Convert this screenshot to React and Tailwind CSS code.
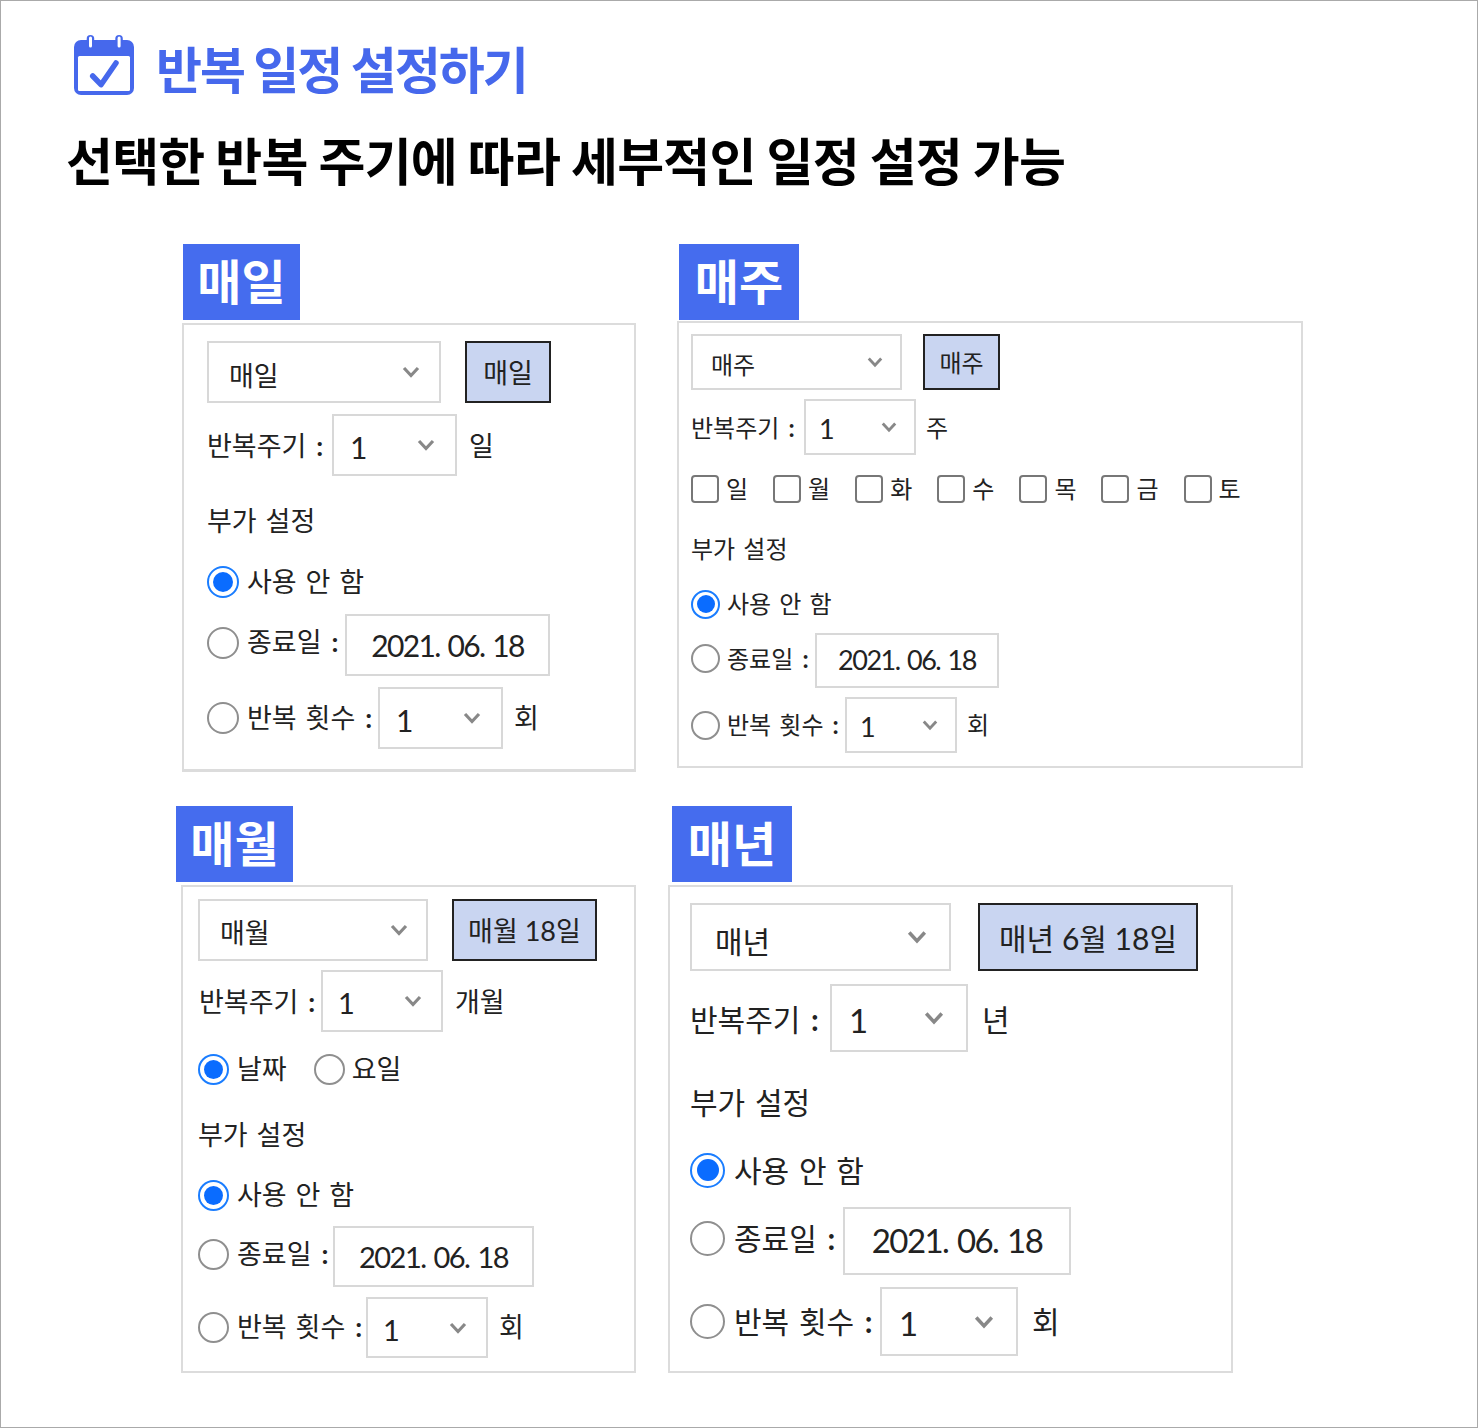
import React from "react";

const uiFont = "font-['Lato','Noto_Sans_CJK_KR',sans-serif] text-[#222]";
const headFont = "font-['Noto_Sans_CJK_KR',sans-serif]";

const CalendarIcon = () => (
  <svg className="-mt-px" width="61" height="61" viewBox="0 0 61 61" fill="none">
    <rect x="0" y="5" width="60" height="55" rx="7" fill="#4668ec" />
    <rect x="4" y="21" width="52" height="35" rx="1.5" fill="#fff" />
    <rect x="12.7" y="0" width="7.5" height="14" rx="3.75" fill="#4668ec" />
    <rect x="41.3" y="0" width="7.5" height="14" rx="3.75" fill="#4668ec" />
    <rect x="15" y="1.5" width="3" height="11" rx="1.5" fill="#fff" />
    <rect x="43.6" y="1.5" width="3" height="11" rx="1.5" fill="#fff" />
    <path d="M18.7 41 L27 49.7 L42 28" stroke="#4668ec" strokeWidth="5.5" strokeLinecap="round" strokeLinejoin="round" />
  </svg>
);

const Chevron = ({ w }) => (
  <svg width={w} height={w} viewBox="0 0 18 18" fill="none">
    <path d="M2 5 L9 12.5 L16 5" stroke="#888" strokeWidth="3.2" />
  </svg>
);

// box that looks like a native select
const Select = ({ className, value, chevron = 18, textClass = "pt-[4px]" }) => (
  <div className={"flex items-center justify-between border-2 border-[#d8d8d8] bg-white " + className}>
    <span className={textClass}>{value}</span>
    <Chevron w={chevron} />
  </div>
);

const Radio = ({ className, dot, checked }) =>
  checked ? (
    <span className={"flex shrink-0 items-center justify-center rounded-full border-2 border-[#1a7dff] bg-white " + className}>
      <span className={"block rounded-full bg-[#0a6cff] " + dot} />
    </span>
  ) : (
    <span className={"block shrink-0 rounded-full border-2 border-[#8f8f8f] bg-white " + className} />
  );

const Colon = () => <b className="ml-px font-bold">:</b>;

const Tag = ({ className, children }) => (
  <div className={"flex h-[76px] items-center justify-center bg-[#456cee] pb-[6px] text-[48px] font-bold text-white " + headFont + " " + className}>
    {children}
  </div>
);

const Daily = () => (
  <div className={"mt-[3px] h-[449px] w-[454px] border-2 border-b-[3px] border-[#dcdcdc] pl-[23px] pt-4 text-[27px] [word-spacing:2px] " + uiFont}>
    <div className="flex">
      <Select className="h-[62px] w-[234px] pl-[20px] pr-[19px]" value="매일" textClass="pt-[8px]" />
      <div className="ml-[24px] flex h-[62px] w-[86px] items-center justify-center border-2 border-[#222] bg-[#c9d5f1] pt-[3px]">매일</div>
    </div>
    <div className="mt-[11px] flex items-center">
      <span className="w-[125px] pt-[2px]">반복주기 <Colon /></span>
      <Select className="h-[62px] w-[125px] pl-[16px] pr-[20px] text-[30px] tracking-[-1.7px]" value="1" />
      <span className="ml-[12px] pt-[2px]">일</span>
    </div>
    <div className="mt-[24px] flex h-[40px] items-center pt-[2px]">부가 설정</div>
    <div className="mt-[22px] flex h-[40px] items-center">
      <Radio checked className="size-[32px]" dot="size-[20px]" />
      <span className="ml-[8px]">사용 안 함</span>
    </div>
    <div className="mt-[12px] flex">
      <div className="flex w-[138px] items-center pb-[5px]">
        <Radio className="size-[32px]" />
        <span className="ml-[8px]">종료일 <Colon /></span>
      </div>
      <div className="flex h-[62px] w-[205px] items-center justify-center border-2 border-[#d8d8d8] text-[30px] tracking-[-1.7px]">2021. 06. 18</div>
    </div>
    <div className="mt-[11px] flex items-center">
      <Radio className="size-[32px]" />
      <span className="ml-[8px] w-[131px]">반복 횟수 <Colon /></span>
      <Select className="h-[62px] w-[125px] pl-[16px] pr-[20px] text-[30px] tracking-[-1.7px]" value="1" />
      <span className="ml-[11px]">회</span>
    </div>
  </div>
);

const days = ["일", "월", "화", "수", "목", "금", "토"];

const Weekly = () => (
  <div className={"mt-px h-[447px] w-[626px] border-2 border-[#dcdcdc] pl-[12px] pt-[11px] text-[24px] [word-spacing:2px] " + uiFont}>
    <div className="flex">
      <Select className="h-[56px] w-[211px] pl-[18px] pr-[17px]" value="매주" chevron={16} textClass="pt-[6px]" />
      <div className="ml-[21px] flex h-[56px] w-[77px] items-center justify-center border-2 border-[#222] bg-[#c9d5f1] pt-[2px]">매주</div>
    </div>
    <div className="mt-[9px] flex items-center">
      <span className="w-[113px] pt-[2px]">반복주기 <Colon /></span>
      <Select className="h-[56px] w-[112px] pl-[13px] pr-[17px] text-[27px] tracking-[-1.5px]" value="1" chevron={16} />
      <span className="ml-[10px] pt-[2px]">주</span>
    </div>
    <div className="mt-[20px] flex h-[27px] items-center gap-[25px]">
      {days.map((d) => (
        <div key={d} className="flex items-center gap-[7px]">
          <span className="block size-[28px] rounded-[4px] border-2 border-[#777] bg-white" />
          <span>{d}</span>
        </div>
      ))}
    </div>
    <div className="mt-[27px] flex h-[40px] items-center">부가 설정</div>
    <div className="mt-[15px] flex h-[40px] items-center">
      <Radio checked className="size-[29px]" dot="size-[18px]" />
      <span className="ml-[7px]">사용 안 함</span>
    </div>
    <div className="mt-[9px] flex">
      <div className="flex w-[124px] items-center pb-[4px]">
        <Radio className="size-[29px]" />
        <span className="ml-[7px]">종료일 <Colon /></span>
      </div>
      <div className="flex h-[55px] w-[184px] items-center justify-center border-2 border-[#d8d8d8] text-[27px] tracking-[-1.5px]">2021. 06. 18</div>
    </div>
    <div className="mt-[9px] flex items-center">
      <Radio className="size-[29px]" />
      <span className="ml-[7px] w-[118px]">반복 횟수 <Colon /></span>
      <Select className="h-[56px] w-[112px] pl-[13px] pr-[17px] text-[27px] tracking-[-1.5px]" value="1" chevron={16} />
      <span className="ml-[10px]">회</span>
    </div>
  </div>
);

const Monthly = () => (
  <div className={"ml-[5px] mt-[3px] h-[488px] w-[455px] border-2 border-[#dcdcdc] pl-[15px] pt-[12px] text-[27px] [word-spacing:2px] " + uiFont}>
    <div className="flex">
      <Select className="h-[62px] w-[230px] pl-[20px] pr-[18px]" value="매월" textClass="pt-[7px]" />
      <div className="ml-[24px] flex h-[62px] w-[145px] items-center justify-center border-2 border-[#222] bg-[#c9d5f1] pt-[2px] [word-spacing:0px]">매월 18일</div>
    </div>
    <div className="mt-[9px] flex items-center">
      <span className="ml-px w-[122px] pt-[2px]">반복주기 <Colon /></span>
      <Select className="h-[62px] w-[122px] pl-[15px] pr-[19px] text-[29px] tracking-[-1.5px]" value="1" />
      <span className="ml-[12px] pt-[2px]">개월</span>
    </div>
    <div className="mt-[16px] flex h-[40px] items-center pt-[2px]">
      <Radio checked className="size-[31px]" dot="size-[19px]" />
      <span className="ml-[8px]">날짜</span>
      <Radio className="ml-[27px] size-[31px]" />
      <span className="ml-[7px]">요일</span>
    </div>
    <div className="mt-[26px] flex h-[40px] items-center pt-[2px]">부가 설정</div>
    <div className="mt-[21px] flex h-[40px] items-center">
      <Radio checked className="size-[31px]" dot="size-[19px]" />
      <span className="ml-[8px]">사용 안 함</span>
    </div>
    <div className="mt-[11px] flex">
      <div className="flex w-[135px] items-center pb-[5px]">
        <Radio className="size-[31px]" />
        <span className="ml-[8px]">종료일 <Colon /></span>
      </div>
      <div className="flex h-[61px] w-[201px] items-center justify-center border-2 border-[#d8d8d8] text-[29px] tracking-[-1.5px]">2021. 06. 18</div>
    </div>
    <div className="mt-[10px] flex items-center">
      <Radio className="size-[31px]" />
      <span className="ml-[8px] w-[129px]">반복 횟수 <Colon /></span>
      <Select className="h-[61px] w-[122px] pl-[15px] pr-[19px] text-[29px] tracking-[-1.5px]" value="1" />
      <span className="ml-[11px]">회</span>
    </div>
  </div>
);

const Yearly = () => (
  <div className={"mt-[3px] h-[488px] w-[565px] border-2 border-[#dcdcdc] pl-[20px] pt-[16px] text-[30px] [word-spacing:2px] " + uiFont}>
    <div className="flex">
      <Select className="h-[68px] w-[261px] pl-[23px] pr-[22px]" value="매년" chevron={20} textClass="pt-[8px]" />
      <div className="ml-[27px] flex h-[68px] w-[220px] items-center justify-center border-2 border-[#222] bg-[#c9d5f1] pt-[3px] [word-spacing:0px]">매년 6월 18일</div>
    </div>
    <div className="mt-[13px] flex items-center">
      <span className="w-[140px] pt-[2px]">반복주기 <Colon /></span>
      <Select className="h-[68px] w-[138px] pl-[17px] pr-[22px] text-[33px] tracking-[-1.6px]" value="1" chevron={20} textClass="pt-[6px]" />
      <span className="ml-[14px] pt-[2px]">년</span>
    </div>
    <div className="mt-[30px] flex h-[40px] items-center">부가 설정</div>
    <div className="mt-[28px] flex h-[40px] items-center">
      <Radio checked className="size-[35px]" dot="size-[22px]" />
      <span className="ml-[9px]">사용 안 함</span>
    </div>
    <div className="mt-[17px] flex">
      <div className="flex w-[153px] items-center pb-[6px]">
        <Radio className="size-[35px]" />
        <span className="ml-[9px]">종료일 <Colon /></span>
      </div>
      <div className="flex h-[68px] w-[228px] items-center justify-center border-2 border-[#d8d8d8] text-[33px] tracking-[-1.6px]">2021. 06. 18</div>
    </div>
    <div className="mt-[12px] flex items-center">
      <Radio className="size-[35px]" />
      <span className="ml-[9px] w-[146px]">반복 횟수 <Colon /></span>
      <Select className="h-[69px] w-[138px] pl-[17px] pr-[22px] text-[33px] tracking-[-1.6px]" value="1" chevron={20} textClass="pt-[5px]" />
      <span className="ml-[14px]">회</span>
    </div>
  </div>
);

export default function App() {
  return (
    <div className="h-[1428px] w-[1478px] border border-[#aaa] bg-white pt-[35px]">
      <div className="ml-[73px] flex h-[60px] items-start">
        <CalendarIcon />
        <h1 className={"ml-[21px] mt-[6px] text-[50px] font-bold leading-none tracking-[-2px] text-[#4668ec] " + headFont}>반복 일정 설정하기</h1>
      </div>
      <h2 className={"ml-[65px] mt-[33px] flex h-[60px] items-center text-[51px] font-bold tracking-[-0.75px] text-black " + headFont}>
        선택한 반복 주기에 따라 세부적인 일정 설정 가능
      </h2>

      <div className="ml-[181px] mt-[55px] flex">
        <div className="w-[454px]">
          <Tag className="ml-px w-[117px]">매일</Tag>
          <Daily />
        </div>
        <div className="ml-[41px]">
          <Tag className="ml-[2px] w-[120px]">매주</Tag>
          <Weekly />
        </div>
      </div>

      <div className="ml-[175px] mt-[34px] flex">
        <div className="w-[460px]">
          <Tag className="w-[117px]">매월</Tag>
          <Monthly />
        </div>
        <div className="ml-[32px]">
          <Tag className="ml-[4px] w-[120px]">매년</Tag>
          <Yearly />
        </div>
      </div>
    </div>
  );
}
